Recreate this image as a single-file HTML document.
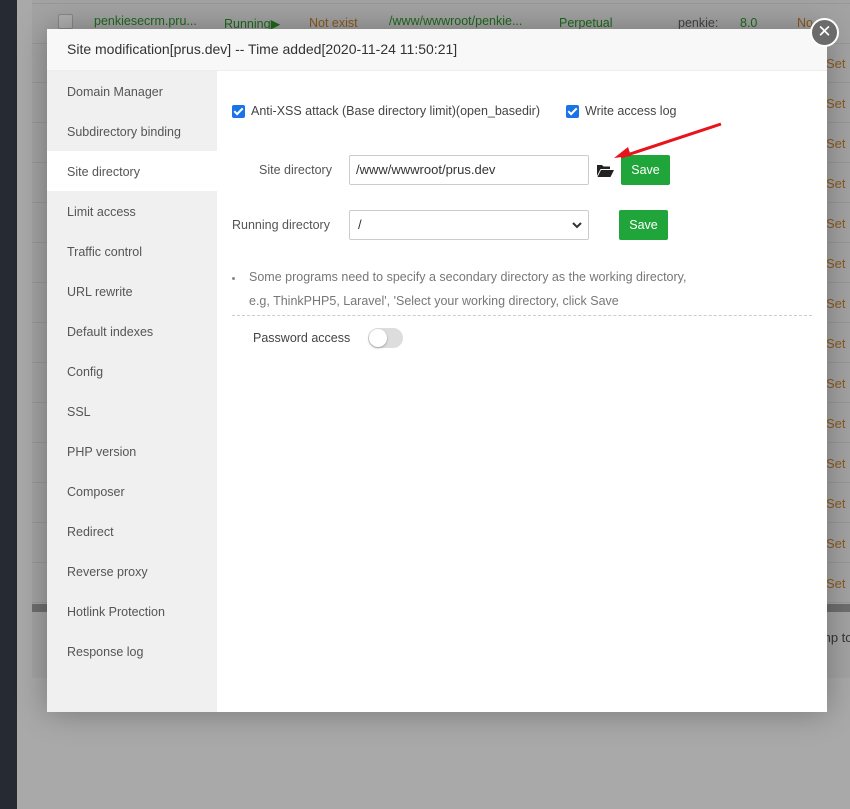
<!DOCTYPE html>
<html><head><meta charset="utf-8"><style>
*{box-sizing:border-box;margin:0;padding:0}
body{width:850px;height:809px;overflow:hidden;background:#a9a9a9;font-family:"Liberation Sans",sans-serif;font-size:12.5px;color:#555;position:relative}
.side{position:absolute;left:0;top:0;width:17px;height:809px;background:#262a33}
.card{position:absolute;left:32px;top:0;width:818px;height:678px;background:#a3a3a3}
.row{position:absolute;left:32px;width:818px;height:40px;border-bottom:1px solid #989898}
.set{position:absolute;left:826px;color:#8a5a1c;font-size:13px}
.modal{position:absolute;left:47px;top:29px;width:780px;height:683px;background:#fff;box-shadow:0 0 30px rgba(0,0,0,.3)}
.hd{height:42px;background:#f8f8f8;border-bottom:1px solid #eee;padding-left:20px;line-height:41px;font-size:14px;color:#333}
.nav{position:absolute;left:0;top:42px;width:170px;bottom:0;background:#f0f0f0}
.nav div{height:40px;line-height:42px;padding-left:20px;color:#555;font-size:12.5px}
.nav .act{background:#fff}
.ct{position:absolute;left:170px;top:42px;right:0;bottom:0}
.cb{position:absolute;width:13px;height:13px;background:#1a73e8;border-radius:2px}
.cb:after{content:"";position:absolute;left:4px;top:1px;width:3px;height:7px;border:solid #fff;border-width:0 2px 2px 0;transform:rotate(45deg)}
.t{position:absolute;white-space:nowrap}
.inp{position:absolute;border:1px solid #ccc;border-radius:2px;height:30px;line-height:28px;padding-left:6px;color:#333;font-size:13px}
.btn{position:absolute;background:#20a53a;color:#fff;border-radius:2px;text-align:center;font-size:12.5px}
</style></head><body>
<div class="side"></div>
<div class="card"></div>
<div class="row" style="top:3px;height:41px;border-top:1px solid #989898"></div>
<div class="t" style="left:58px;top:14px;width:15px;height:15px;border:1px solid #888;background:#b0b0b0;border-radius:2px"></div>
<div class="t" style="left:94px;top:14px;color:#1c6b1c;font-size:12.5px">penkiesecrm.pru...</div>
<div class="t" style="left:224px;top:16px;color:#1c6b1c;font-size:12.5px">Running&#9654;</div>
<div class="t" style="left:309px;top:16px;color:#8a5a1c;font-size:12.5px">Not exist</div>
<div class="t" style="left:389px;top:14px;color:#1c6b1c;font-size:12.5px">/www/wwwroot/penkie...</div>
<div class="t" style="left:559px;top:16px;color:#1c6b1c;font-size:12.5px">Perpetual</div>
<div class="t" style="left:678px;top:16px;color:#444;font-size:12.5px">penkie:</div>
<div class="t" style="left:740px;top:16px;color:#1c6b1c;font-size:12.5px">8.0</div>
<div class="t" style="left:797px;top:16px;color:#8a5a1c;font-size:12.5px">No</div>
<div class="row" style="top:43px"></div><div class="row" style="top:83px"></div><div class="row" style="top:123px"></div><div class="row" style="top:163px"></div><div class="row" style="top:203px"></div><div class="row" style="top:243px"></div><div class="row" style="top:283px"></div><div class="row" style="top:323px"></div><div class="row" style="top:363px"></div><div class="row" style="top:403px"></div><div class="row" style="top:443px"></div><div class="row" style="top:483px"></div><div class="row" style="top:523px"></div><div class="row" style="top:563px"></div>
<div class="set t" style="top:56px">Set</div><div class="set t" style="top:96px">Set</div><div class="set t" style="top:136px">Set</div><div class="set t" style="top:176px">Set</div><div class="set t" style="top:216px">Set</div><div class="set t" style="top:256px">Set</div><div class="set t" style="top:296px">Set</div><div class="set t" style="top:336px">Set</div><div class="set t" style="top:376px">Set</div><div class="set t" style="top:416px">Set</div><div class="set t" style="top:456px">Set</div><div class="set t" style="top:496px">Set</div><div class="set t" style="top:536px">Set</div><div class="set t" style="top:576px">Set</div>
<div class="t" style="left:32px;top:604px;width:818px;height:8px;background:#6e6e6e"></div>
<div class="t" style="left:820px;top:630px;color:#333;font-size:13px">mp to</div>

<div class="modal">
<div class="hd">Site modification[prus.dev] -- Time added[2020-11-24 11:50:21]</div>
<div class="nav">
<div>Domain Manager</div><div>Subdirectory binding</div><div class="act">Site directory</div><div>Limit access</div><div>Traffic control</div><div>URL rewrite</div><div>Default indexes</div><div>Config</div><div>SSL</div><div>PHP version</div><div>Composer</div><div>Redirect</div><div>Reverse proxy</div><div>Hotlink Protection</div><div>Response log</div>
</div>
<div class="ct">
<div class="cb" style="left:15px;top:34px"></div>
<div class="t" style="left:34px;top:33px;color:#444">Anti-XSS attack (Base directory limit)(open_basedir)</div>
<div class="cb" style="left:349px;top:34px"></div>
<div class="t" style="left:368px;top:33px;color:#444">Write access log</div>
<div class="t" style="left:42px;top:92px;color:#555">Site directory</div>
<div class="inp" style="left:132px;top:84px;width:240px">/www/wwwroot/prus.dev</div>
<svg class="t" style="left:380px;top:93px" width="17" height="13" viewBox="0 0 17 13"><path d="M0 1h5l1.5 1.5H13V5H3.5L0 12z" fill="#222"/><path d="M4 6h13l-3.5 7H0.5z" fill="#222"/></svg>
<div class="btn" style="left:404px;top:84px;width:49px;height:30px;line-height:30px">Save</div>
<div class="t" style="left:15px;top:147px;color:#555">Running directory</div>
<div class="inp" style="left:132px;top:139px;width:240px;padding-left:8px">/<svg style="position:absolute;right:6px;top:11px" width="10" height="7" viewBox="0 0 10 7"><path d="M1 1l4 4 4-4" stroke="#333" stroke-width="2" fill="none"/></svg></div>
<div class="btn" style="left:402px;top:139px;width:49px;height:30px;line-height:30px">Save</div>
<div class="t" style="left:15px;top:206px;width:3px;height:3px;border-radius:50%;background:#888"></div>
<div class="t" style="left:32px;top:199px;color:#777">Some programs need to specify a secondary directory as the working directory,</div>
<div class="t" style="left:32px;top:223px;color:#777">e.g, ThinkPHP5, Laravel', 'Select your working directory, click Save</div>
<div class="t" style="left:15px;top:244px;width:580px;border-top:1px dashed #ccc"></div>
<div class="t" style="left:36px;top:260px;color:#444">Password access</div>
<div class="t" style="left:151px;top:257px;width:35px;height:20px;border-radius:10px;background:#ddd;border:1px solid #ddd"><div style="width:18px;height:18px;border-radius:50%;background:#fff;box-shadow:0 1px 2px rgba(0,0,0,.3)"></div></div>
</div>
</div>
<svg class="t" style="left:395px;top:120px" width="330" height="45"><path d="M326 4L226 37" stroke="#e8141c" stroke-width="3"/><path d="M219 38l14-11 3 9z" fill="#e8141c"/></svg>
<div class="t" style="left:810px;top:18px;width:29px;height:29px;border-radius:50%;background:#6b6b6b;border:2px solid #fff;color:#fff;text-align:center;line-height:24px;font-size:17px">&#x2715;</div>
</body></html>
